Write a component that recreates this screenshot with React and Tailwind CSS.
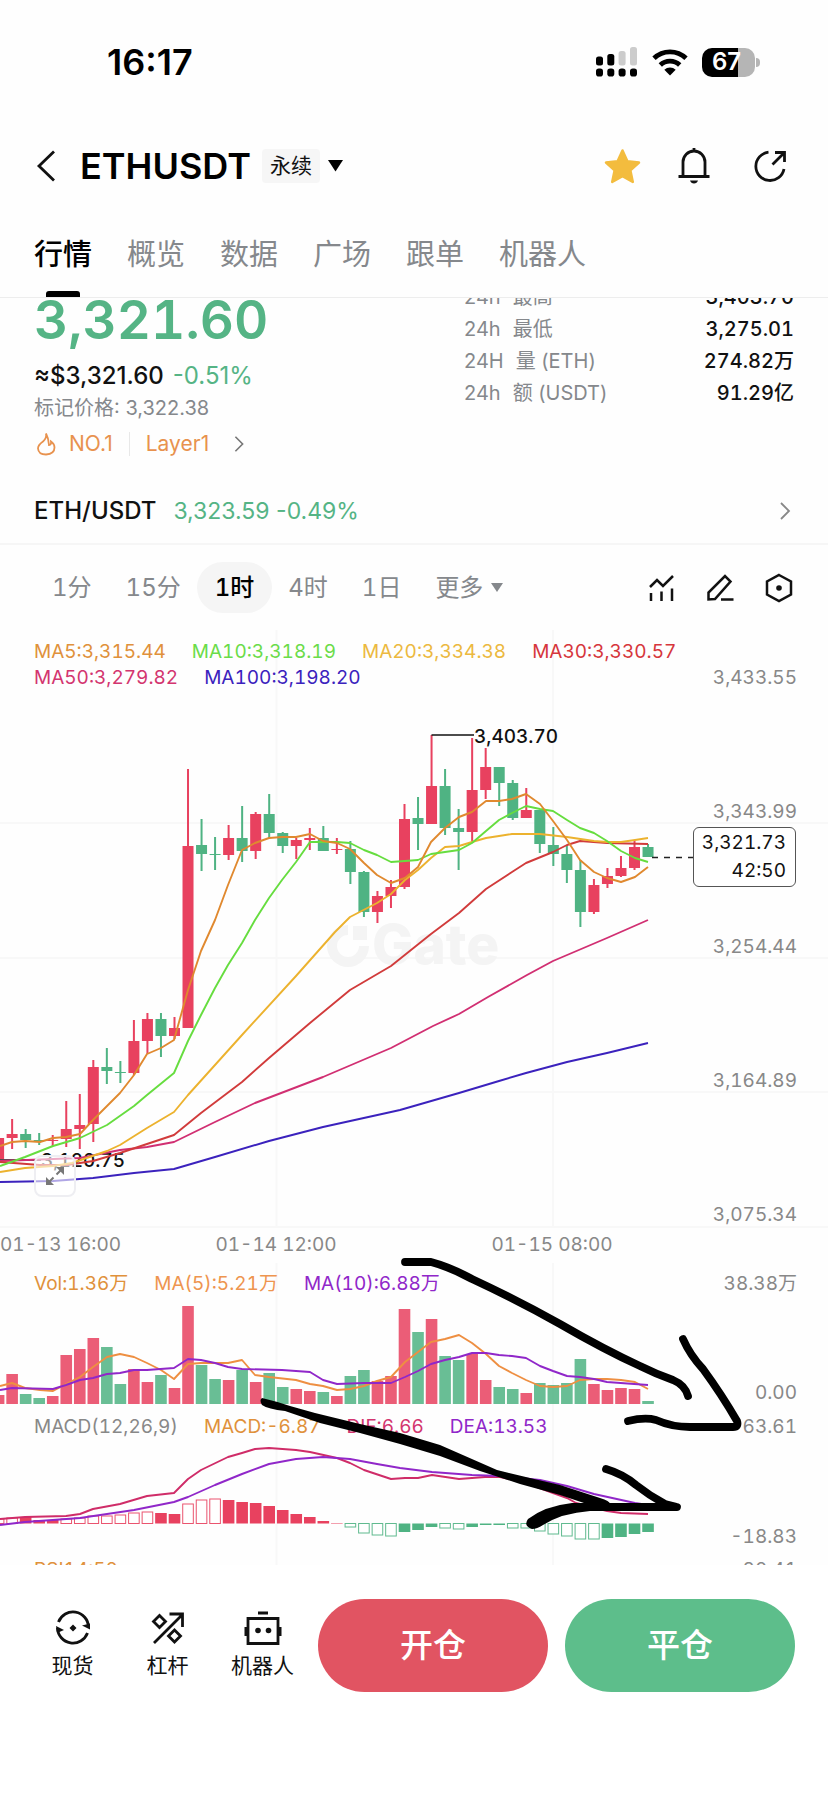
import React from "react";

const UP = "#e8415f";
const DOWN = "#4fb383";

// Candle columns: direction, high, body top, body bottom, low, volume top, MACD end, hollow MACD bar
const BARS = [
  ["u", 1138, 1138, 1159, 1159, 1395, 1519, 1],
  ["u", 1119, 1134, 1138, 1149, 1374, 1518, 1],
  ["d", 1129, 1134, 1140, 1148, 1394, 1517, 0],
  ["d", 1133, 1140, 1141, 1145, 1398, 1520, 0],
  ["u", 1135, 1140, 1141, 1146, 1396, 1520, 0],
  ["u", 1101, 1129, 1139, 1147, 1355, 1519, 1],
  ["u", 1094, 1125, 1129, 1149, 1349, 1518, 1],
  ["u", 1060, 1067, 1124, 1142, 1338, 1516, 1],
  ["d", 1048, 1067, 1071, 1084, 1347, 1516, 1],
  ["d", 1061, 1072, 1073, 1083, 1384, 1515, 1],
  ["u", 1020, 1041, 1073, 1075, 1369, 1513, 1],
  ["u", 1013, 1019, 1041, 1054, 1382, 1512, 1],
  ["d", 1013, 1019, 1036, 1057, 1375, 1513, 0],
  ["u", 1017, 1028, 1036, 1039, 1388, 1514, 0],
  ["u", 769, 846, 1028, 1028, 1306, 1504, 1],
  ["d", 819, 845, 854, 871, 1365, 1500, 1],
  ["d", 837, 854, 855, 870, 1379, 1499, 1],
  ["u", 825, 838, 855, 860, 1380, 1500, 0],
  ["d", 806, 838, 851, 862, 1370, 1502, 0],
  ["u", 812, 814, 851, 859, 1382, 1503, 0],
  ["d", 794, 814, 833, 839, 1373, 1506, 0],
  ["d", 832, 833, 846, 853, 1387, 1510, 0],
  ["u", 838, 840, 846, 859, 1389, 1514, 0],
  ["u", 828, 838, 840, 850, 1391, 1517, 0],
  ["d", 826, 838, 851, 851, 1392, 1521, 0],
  ["u", 838, 849, 850, 854, 1396, 1523, 0],
  ["d", 841, 849, 872, 884, 1376, 1527, 1],
  ["d", 871, 872, 912, 917, 1370, 1533, 1],
  ["u", 891, 896, 912, 923, 1381, 1535, 1],
  ["u", 880, 887, 896, 908, 1376, 1536, 1],
  ["u", 804, 819, 887, 889, 1309, 1532, 0],
  ["d", 797, 818, 824, 850, 1332, 1530, 0],
  ["u", 735, 786, 824, 824, 1319, 1527, 0],
  ["d", 769, 786, 828, 835, 1356, 1528, 1],
  ["d", 809, 828, 832, 870, 1360, 1529, 1],
  ["u", 738, 790, 832, 843, 1354, 1527, 0],
  ["u", 748, 767, 790, 799, 1380, 1525, 0],
  ["d", 767, 767, 783, 806, 1387, 1525, 0],
  ["d", 780, 783, 818, 820, 1389, 1528, 1],
  ["u", 788, 810, 818, 818, 1393, 1528, 1],
  ["d", 810, 810, 844, 853, 1383, 1531, 1],
  ["d", 827, 845, 854, 866, 1385, 1534, 1],
  ["d", 845, 854, 870, 883, 1383, 1536, 1],
  ["d", 860, 870, 912, 927, 1359, 1539, 1],
  ["u", 879, 885, 912, 914, 1384, 1539, 1],
  ["u", 868, 876, 884, 888, 1390, 1538, 0],
  ["u", 856, 868, 876, 877, 1388, 1537, 0],
  ["u", 841, 847, 868, 870, 1389, 1534, 0],
  ["d", 844, 847, 857, 857, 1401, 1532, 0],
];
const barX = (i) => -1.4 + 13.53 * i;

const LINES = [
  ["#3b22bd", "0,1182 53,1181 93,1178 134,1173 174,1169 215,1157 269,1141 323,1127 391,1112 400,1110 459,1093 499,1081 526,1073 567,1062 607,1053 648,1043"],
  ["#d12f72", "0,1161 53,1159 80,1158 120,1150 147,1147 174,1142 215,1122 255,1103 323,1077 391,1048 433,1026 459,1014 488,997 527,975 553,961 607,938 648,920"],
  ["#d13b3b", "0,1162 40,1165 67,1165 93,1161 120,1153 147,1144 174,1135 201,1113 242,1082 269,1058 310,1023 350,990 391,966 431,934 459,913 486,889 512,872 526,863 553,852 567,845 580,841 607,843 648,844"],
  ["#ecb22e", "0,1172 25,1168 53,1166 72,1163 107,1151 120,1145 147,1128 174,1112 188,1095 242,1035 296,976 335,932 350,917 377,903 391,894 405,880 418,870 431,858 445,847 459,846 472,842 486,838 499,836 512,834 540,834 567,837 594,841 607,842 621,842 635,840 648,838"],
  ["#66dd3f", "0,1166 25,1157 53,1146 80,1138 107,1125 134,1106 147,1095 174,1073 188,1041 201,1015 215,988 228,965 242,943 255,920 269,898 282,880 296,862 310,842 323,842 337,842 350,843 364,850 377,855 391,862 405,861 418,860 431,854 445,852 459,850 472,843 486,831 499,820 512,813 526,806 540,809 553,811 567,820 580,828 594,833 607,841 621,851 635,858 648,862"],
  ["#e0892f", "0,1146 12,1142 25,1141 40,1142 53,1138 66,1137 80,1134 93,1120 107,1106 120,1093 134,1075 147,1054 161,1048 174,1040 188,990 201,951 215,920 228,885 242,850 255,843 269,838 282,837 296,837 310,834 323,841 337,843 350,849 364,863 377,875 391,883 405,878 418,867 431,842 445,828 459,817 472,812 486,801 499,801 512,799 526,794 540,804 553,821 567,840 580,860 594,872 607,878 621,882 635,877 648,867"],
  ["#ee8f42", "0,1386 12,1383 25,1388 40,1390 53,1391 66,1384 80,1377 93,1367 107,1357 120,1354 134,1357 147,1363 161,1370 174,1379 188,1364 201,1363 228,1363 242,1360 255,1375 269,1377 296,1380 310,1384 323,1386 337,1390 350,1389 364,1386 377,1381 391,1377 405,1362 418,1352 431,1342 445,1339 459,1335 472,1343 486,1354 499,1366 512,1373 526,1380 540,1386 553,1387 567,1386 580,1380 594,1379 607,1379 621,1380 635,1382 648,1389"],
  ["#9027c9", "0,1390 12,1388 53,1389 66,1385 80,1380 93,1378 107,1374 120,1373 134,1370 147,1370 174,1368 188,1359 201,1360 215,1363 228,1367 242,1369 282,1370 310,1372 323,1380 337,1384 364,1383 391,1383 405,1377 418,1371 431,1364 445,1360 459,1357 472,1353 486,1353 499,1355 512,1356 526,1358 540,1366 553,1371 567,1376 580,1377 594,1379 607,1382 648,1385"],
  ["#cf2c68", "0,1519 25,1517 66,1516 80,1514 93,1509 120,1504 147,1496 174,1493 188,1479 201,1470 228,1457 242,1453 255,1449 269,1448 296,1450 310,1452 337,1458 350,1463 364,1470 391,1479 405,1478 418,1478 432,1475 459,1479 485,1477 500,1477 526,1483 553,1493 567,1498 576,1503 607,1511 621,1513 648,1514"],
  ["#9027c9", "0,1525 25,1522 80,1518 134,1510 174,1502 188,1497 215,1485 242,1474 269,1464 296,1459 323,1457 350,1459 377,1464 400,1468 432,1472 472,1475 500,1476 540,1480 567,1486 594,1494 635,1503 648,1505"],
];

function Chart() {
  return (
    <svg
      className="absolute inset-0 h-full w-full"
      viewBox="0 630 828 935"
      preserveAspectRatio="none"
      aria-hidden="true"
    >
      <g stroke="#f8f8f8" strokeWidth="2">
        <path d="M276.500 630V1227M276.500 1263V1565M553 630V1227M553 1263V1565" />
        <path d="M0 823H828M0 958H828M0 1092H828M0 1227H828" />
      </g>
      <g fill="#f4f4f4">
        <path d="M348 925v10a11 11 0 1 0 11 11h10a21 21 0 1 1-21-21z" />
        <path d="M353 926h14v14h-14z" />
        <text x="372" y="964" fontSize="55" fontWeight="800">Gate</text>
      </g>
      <text x="41" y="1167" fontSize="19" fontWeight="500" fill="#111">3,120.75</text>
      <path d="M0 1160H41" stroke="#111" strokeWidth="1.500" />
      {BARS.map(([dir, high, top, bottom, low, vol, macd, hollow], i) => {
        const x = barX(i);
        const color = dir === "u" ? UP : DOWN;
        const macdColor = macd < 1523.5 ? UP : DOWN;
        const y = Math.min(macd, 1523.5);
        const h = Math.abs(macd - 1523.5);
        return (
          <g key={i}>
            <rect x={x - 1} y={high} width="2" height={low - high} fill={color} />
            <rect x={x - 5.5} y={top} width="11" height={bottom - top} fill={color} />
            <rect x={x - 5.8} y={vol} width="11.600" height={1404 - vol} fill={color} opacity="0.850" />
            {hollow ? (
              <rect x={x - 5.3} y={y} width="10.600" height={h} fill="#fff" stroke={macdColor} strokeOpacity="0.9" />
            ) : (
              <rect x={x - 5.8} y={y} width="11.600" height={h} fill={macdColor} />
            )}
          </g>
        );
      })}
      {LINES.map(([color, points], i) => (
        <polyline key={i} points={points} fill="none" stroke={color} strokeWidth="1.900" strokeLinejoin="round" />
      ))}
      <path d="M431.500 735H474" stroke="#111" strokeWidth="1.500" />
      <text x="474" y="743" fontSize="19" fontWeight="500" fill="#111">3,403.70</text>
      <path d="M652 857.500H693" stroke="#222" strokeWidth="1.500" strokeDasharray="6 6" />
    </svg>
  );
}

function Scribbles() {
  return (
    <svg
      className="pointer-events-none absolute inset-0 h-full w-full"
      viewBox="0 630 828 935"
      preserveAspectRatio="none"
      aria-hidden="true"
    >
      <g fill="none" stroke="#000" strokeWidth="7.800" strokeLinecap="round" strokeLinejoin="round">
        <path d="M405 1262H431Q450 1267 472 1279Q515 1299 560 1324Q605 1350 640 1366Q656 1374 673 1380Q685 1385 688 1396" />
        <path d="M683 1339Q690 1355 703 1369Q722 1395 737 1421Q739 1427 733 1427H690Q672 1427 656 1420Q645 1417 628 1421" />
        <path d="M606 1469Q623 1474 636 1485Q650 1496 665 1504L677 1507H600" />
      </g>
      <path d="M262 1398Q275 1401 290 1406L315 1413L360 1424L400 1433L440 1445L497 1470L530 1478L560 1485L600 1498Q610 1501 610 1504L596 1507L560 1495L520 1484L480 1471L440 1456L400 1444L360 1433L320 1423L285 1411Q268 1409 262 1405Q259 1400 262 1398Z" />
      <path d="M620 1503H572Q545 1506 528 1519Q523 1526 532 1529Q537 1529 543 1525Q562 1513 590 1511H640V1504Z" />
    </svg>
  );
}

const Legend = ({ items }) => (
  <div className="flex gap-[26px]">
    {items.map(([text, color]) => (
      <span key={text} className={color}>{text}</span>
    ))}
  </div>
);

const Chevron = ({ className }) => (
  <svg className={className} width="12" height="20" viewBox="0 0 12 20" fill="none" stroke="currentColor" strokeWidth="1.800" aria-hidden="true">
    <path d="M2 2l8 8-8 8" />
  </svg>
);

const STATS = [
  ["24h", "最高", "3,403.70"],
  ["24h", "最低", "3,275.01"],
  ["24H", "量 (ETH)", "274.82万"],
  ["24h", "额 (USDT)", "91.29亿"],
];

export default function App() {
  return (
    <div className="flex min-h-screen flex-col overflow-x-hidden bg-[#fefefe] font-['Inter','Noto_Sans_CJK_SC',sans-serif] text-[#111]">
      <div className="flex h-[124px] items-center justify-between pr-[68px] pl-[107px]">
        <div className="text-[36px] leading-10 font-semibold text-black">16:17</div>
        <div className="flex items-center gap-[14px]">
          <svg width="42" height="30" viewBox="0 0 42 30" aria-label="信号">
            <rect x="0" y="9.500" width="7" height="9" rx="2.500" />
            <rect x="11.300" y="7" width="7" height="11.500" rx="2.500" />
            <rect x="22.600" y="4" width="7" height="14.500" rx="2.500" fill="#ccc" />
            <rect x="34" y="0" width="7" height="18.500" rx="2.500" fill="#ccc" />
            <rect x="0" y="21.500" width="7" height="8" rx="2.800" />
            <rect x="11.300" y="21.500" width="7" height="8" rx="2.800" />
            <rect x="22.600" y="21.500" width="7" height="8" rx="2.800" />
            <rect x="34" y="21.500" width="7" height="8" rx="2.800" />
          </svg>
          <svg width="36" height="28" viewBox="0 0 36 28" fill="none" stroke="#000" strokeWidth="4.800" aria-label="无线网络">
            <path d="M2 10.300a23 23 0 0 1 32 0" />
            <path d="M8.300 17a14 14 0 0 1 19.400 0" />
            <path d="M12.300 21.700a8.300 8.300 0 0 1 11.400 0L18 27.500z" fill="#000" stroke="none" />
          </svg>
          <div className="flex items-center gap-px">
            <div className="flex h-[29px] w-[53px] items-center rounded-[10px] bg-[linear-gradient(90deg,#000_67%,#b5b5b5_67%)] pl-[10px] text-[24px] leading-none font-semibold text-white">67</div>
            <div className="h-[9px] w-1 rounded-r-full bg-[#b5b5b5]" />
          </div>
        </div>
      </div>

      <header className="flex h-[84px] items-center pr-[41px] pl-9">
        <button aria-label="返回" className="mr-6">
          <svg width="20" height="32" viewBox="0 0 20 32" fill="none" stroke="currentColor" strokeWidth="2.800">
            <path d="M18 1.500L3 16l15 14.500" />
          </svg>
        </button>
        <h1 className="text-[36px] leading-10 font-semibold text-black">ETHUSDT</h1>
        <button className="ml-[11px] flex items-center gap-2 text-[21px]">
          <span className="flex h-[34px] items-center rounded bg-[#f6f6f6] px-2">永续</span>
          <svg width="15" height="12" viewBox="0 0 15 12" aria-hidden="true"><path d="M0 0h15L7.500 11.500z" /></svg>
        </button>
        <div className="ml-auto flex items-center gap-[36px]">
          <button aria-label="收藏">
            <svg width="37" height="36" viewBox="0 0 37 36" fill="#f3bc3e" stroke="#f3bc3e" strokeWidth="2.500" strokeLinejoin="round">
              <path d="M18.500 2.500l4.900 10.700 11.600 1.300-8.600 7.900 2.400 11.500-10.300-5.700-10.300 5.700 2.400-11.500L2 14.500l11.600-1.300z" />
            </svg>
          </button>
          <button aria-label="提醒">
            <svg width="34" height="38" viewBox="0 0 34 38" fill="none" stroke="currentColor" strokeWidth="2.800">
              <path d="M17 1v3M6 28V15a11 11 0 0 1 22 0v13M1.500 29.500h31" />
              <path d="M13 33.500h8q-1 3-4 3t-4-3z" fill="currentColor" stroke="none" />
            </svg>
          </button>
          <button aria-label="分享" className="ml-1.5">
            <svg width="34" height="34" viewBox="0 0 34 34" fill="none" stroke="currentColor" strokeWidth="2.800">
              <path d="M15.500 3.200A14.200 14.200 0 1 0 31 20" />
              <path d="M19.500 15.500L30 5M22 3.500h9.500V13" />
            </svg>
          </button>
        </div>
      </header>

      <nav className="flex h-[90px] gap-[35px] border-b border-[#ededed] px-[34px] text-[29px]">
        {["行情", "概览", "数据", "广场", "跟单", "机器人"].map((t, i) => (
          <button
            key={t}
            className={i === 0 ? "relative pt-1 font-medium text-black" : "pt-1 text-[#85888c]"}
          >
            {t}
            {i === 0 && <span className="absolute bottom-0 left-3 h-[6px] w-[34px] rounded-t-[3px] bg-black" />}
          </button>
        ))}
      </nav>

      <section className="flex justify-between px-[34px] text-xl leading-8">
        <div>
          <div className="text-[53px] leading-[44px] font-semibold text-[#55b485] tabular-nums">3,321.60</div>
          <div className="mt-[18px] flex gap-[9px] text-[24px] font-medium">
            <span>≈$3,321.60</span>
            <span className="font-normal text-[#55b485]">-0.51%</span>
          </div>
          <div className="text-[#85888c]">标记价格: 3,322.38</div>
          <div className="mt-1 flex items-center text-[21px] text-[#e8924e]">
            <svg className="mr-3 ml-0.5" width="21" height="24" viewBox="0 0 21 24" fill="none" stroke="currentColor" strokeWidth="1.800" aria-hidden="true">
              <path d="M10 1.500Q11 6 7 9.500Q2 13 2 16.500Q2.500 22.500 10 22.500Q18.500 22 18.500 15.500Q18.500 12 15 9.500Q15.500 13 13 13Q12.500 6 10 1.500z" />
            </svg>
            <span>NO.1</span>
            <span className="mx-4 h-6 w-px bg-[#e8e8e8]" />
            <span>Layer1</span>
            <Chevron className="ml-6 h-[18px] text-[#777]" />
          </div>
        </div>
        <div className="w-[330px] overflow-hidden">
          <dl className="-mt-[17px]">
            {STATS.map(([a, b, v]) => (
              <div key={b} className="flex justify-between">
                <dt className="flex gap-3 text-[#85888c]"><span>{a}</span><span>{b}</span></dt>
                <dd className="font-medium tabular-nums">{v}</dd>
              </div>
            ))}
          </dl>
        </div>
      </section>

      <a href="#spot" className="mt-[19px] flex h-[66px] items-center border-b-2 border-[#f6f6f6] pr-[37px] pl-[34px] text-[23px]">
        <span className="text-[24px] font-medium">ETH/USDT</span>
        <span className="ml-[17px] text-[#55b485]">3,323.59 -0.49%</span>
        <Chevron className="ml-auto text-[#888]" />
      </a>

      <div className="flex h-[85px] items-center pr-[35px] pl-[52px]">
        <div className="flex items-center gap-[34px] text-[24px] text-[#85888c] tabular-nums">
          <button>1分</button>
          <button>15分</button>
          <button className="-mx-[18px] h-[51px] rounded-full bg-[#f5f5f5] px-[18px] font-medium text-black">1时</button>
          <button>4时</button>
          <button>1日</button>
          <button className="flex items-center gap-2">
            更多
            <svg width="12" height="10" viewBox="0 0 12 10" fill="currentColor" aria-hidden="true"><path d="M0 0h12L6 9z" /></svg>
          </button>
        </div>
        <div className="ml-auto flex items-center gap-[31px]">
          <button aria-label="指标">
            <svg width="27" height="28" viewBox="0 0 27 28" fill="none" stroke="currentColor" strokeWidth="2.500">
              <path d="M2 13l7-7 6 6L25 2M3 19v8M13.500 17.500V27M24 14.500V27" />
            </svg>
          </button>
          <button aria-label="画线">
            <svg width="28" height="28" viewBox="0 0 28 28" fill="none" stroke="currentColor" strokeWidth="2.500">
              <path d="M2.500 25.500v-7L19 2l5.500 5.500L9 25z M15 25.500h12.500" />
            </svg>
          </button>
          <button aria-label="设置">
            <svg width="28" height="30" viewBox="0 0 28 30" fill="none" stroke="currentColor" strokeWidth="2.500">
              <path d="M14 2l12 6.500v13L14 28 2 21.500v-13z" />
              <circle cx="14" cy="15" r="2.800" fill="currentColor" stroke="none" />
            </svg>
          </button>
        </div>
      </div>

      <section className="relative h-[935px] overflow-hidden text-[19px] leading-[26px] tabular-nums">
        <Chart />
        <div className="relative h-[597px] pt-[9px] pr-[31px] pl-[34px]">
          <Legend items={[
            ["MA5:3,315.44", "text-[#e0913b]"],
            ["MA10:3,318.19", "text-[#6bdc49]"],
            ["MA20:3,334.38", "text-[#ecb940]"],
            ["MA30:3,330.57", "text-[#d6363c]"],
          ]} />
          <div className="flex h-[563px] justify-between">
            <Legend items={[
              ["MA50:3,279.82", "text-[#d3356f]"],
              ["MA100:3,198.20", "text-[#3b22bd]"],
            ]} />
            <div className="flex flex-col justify-between text-right text-[#888]">
              <span>3,433.55</span>
              <span>3,343.99</span>
              <span>3,254.44</span>
              <span>3,164.89</span>
              <span>3,075.34</span>
            </div>
          </div>
          <div className="absolute top-[197px] right-[32px] flex h-[60px] w-[103px] flex-col justify-center rounded-md border border-[#555] bg-white pr-[9px] text-right leading-7">
            <span>3,321.73</span>
            <span>42:50</span>
          </div>
          <button aria-label="全屏" className="absolute bottom-[30px] left-[34px] flex size-[42px] items-center justify-center rounded-lg border-2 border-[#eeeef2] bg-white/60">
            <svg width="22" height="22" viewBox="0 0 22 22" fill="#777" stroke="#777" strokeWidth="2">
              <path d="M12 2h8v8zM2 12v8h8z" stroke="none" />
              <path d="M12.500 9.500L18 4M9.500 12.500L4 18" />
            </svg>
          </button>
        </div>
        <div className="relative grid h-9 grid-cols-6 items-center text-center whitespace-nowrap text-[#888]">
          <span className="text-left">01-13 16:00</span>
          <span className="col-span-2">01-14 12:00</span>
          <span className="col-span-2">01-15 08:00</span>
        </div>
        <div className="relative mt-2 flex h-[135px] justify-between pr-[31px] pl-[34px]">
          <Legend items={[
            ["Vol:1.36万", "text-[#e0913b]"],
            ["MA(5):5.21万", "text-[#ee954f]"],
            ["MA(10):6.88万", "text-[#9027c9]"],
          ]} />
          <div className="flex flex-col justify-between text-right text-[#888]">
            <span>38.38万</span>
            <span>0.00</span>
          </div>
        </div>
        <div className="relative mt-2 flex h-[136px] justify-between pr-[31px] pl-[34px]">
          <Legend items={[
            ["MACD(12,26,9)", "text-[#888]"],
            ["MACD:-6.87", "text-[#e0913b]"],
            ["DIF:6.66", "text-[#d3356f]"],
            ["DEA:13.53", "text-[#9027c9]"],
          ]} />
          <div className="flex flex-col justify-between text-right text-[#888]">
            <span>63.61</span>
            <span>-18.83</span>
          </div>
        </div>
        <div className="relative mt-[7px] flex justify-between pr-[31px] pl-[34px]">
          <span className="text-[#e0913b]">RSI14:50</span>
          <span className="text-[#888]">80.41</span>
        </div>
        <Scribbles />
      </section>

      <footer className="flex items-start bg-white pt-[34px] pr-[33px] pb-[106px] pl-[25px]">
        <nav className="mr-2 flex pt-[11px] text-[21px] leading-[30px]">
          <button className="flex w-[95px] flex-col items-center gap-[5px]">
            <svg width="38" height="36" viewBox="0 0 38 36" fill="none" stroke="currentColor" strokeWidth="2.800">
              <path d="M4.500 12A15.500 15.500 0 0 1 34.500 17M33.500 23A15.500 15.500 0 0 1 3.500 18" />
              <path d="M28 15.500l8 4v-6zM2 16l8 4-7 3zM19 14.500l3.500 3.500-3.500 3.500-3.500-3.500z" fill="currentColor" stroke="none" />
            </svg>
            现货
          </button>
          <button className="flex w-[95px] flex-col items-center gap-[5px]">
            <svg width="34" height="36" viewBox="0 0 34 36" fill="none" stroke="currentColor" strokeWidth="2.800">
              <path d="M3 33L31 5M18.500 4H31.500V17M8.500 5.500l6 6-6 6-6-6zM23.500 20l6 6-6 6-6-6z" />
            </svg>
            杠杆
          </button>
          <button className="flex w-[95px] flex-col items-center gap-[5px]">
            <svg width="38" height="36" viewBox="0 0 38 36" fill="none" stroke="currentColor" strokeWidth="2.800">
              <path d="M14 3h10M4 8.500h30v25H4z" />
              <path d="M2 17v9M36 17v9" strokeWidth="3" />
              <circle cx="14" cy="20.500" r="2.800" fill="currentColor" stroke="none" />
              <circle cx="24.500" cy="20.500" r="2.800" fill="currentColor" stroke="none" />
            </svg>
            机器人
          </button>
        </nav>
        <div className="flex flex-1 gap-[17px] text-[33px] font-medium text-white">
          <button className="h-[93px] flex-1 rounded-full bg-[#e15462]">开仓</button>
          <button className="h-[93px] flex-1 rounded-full bg-[#5dbe8b]">平仓</button>
        </div>
      </footer>
    </div>
  );
}
